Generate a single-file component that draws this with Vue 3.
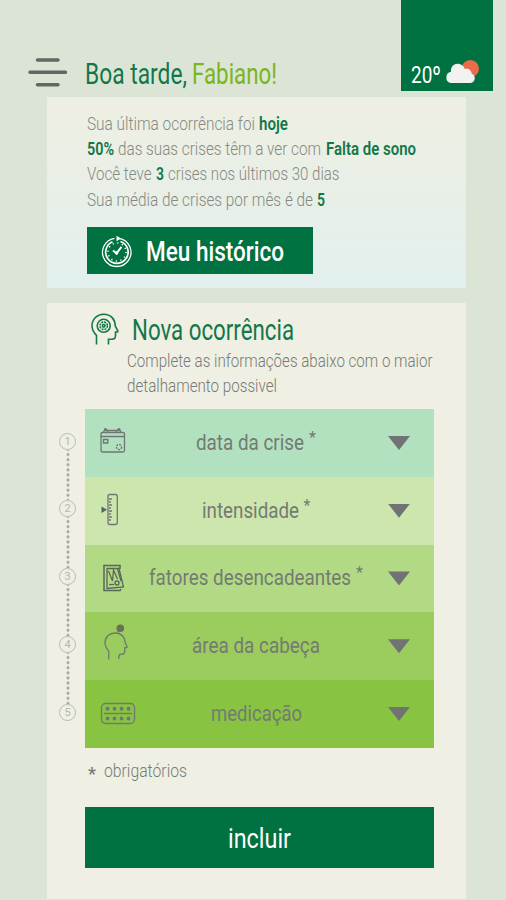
<script setup>
// Condenses a piece of text horizontally to the given width, keeping the flow in step.
const vFit = {
  mounted(el, { value }) {
    const natural = el.getBoundingClientRect().width
    el.style.transform = `scaleX(${value / natural})`
    el.style.marginRight = `${value - natural}px`
  },
}

const summary = [
  [{ t: 'Sua última ocorrência foi', w: 168 }, { t: 'hoje', w: 29, b: true }],
  [{ t: '50%', w: 27, b: true }, { t: 'das suas crises têm a ver com', w: 203 }, { t: 'Falta de sono', w: 90, b: true }],
  [{ t: 'Você teve', w: 64.5 }, { t: '3', w: 8, b: true }, { t: 'crises nos últimos 30 dias', w: 171.5 }],
  [{ t: 'Sua média de crises por mês é de', w: 226 }, { t: '5', w: 8, b: true }],
]

const steps = [
  { id: 'date', label: 'data da crise', w: 108, required: true },
  { id: 'intensity', label: 'intensidade', w: 97, required: true },
  { id: 'factors', label: 'fatores desencadeantes', w: 202, required: true },
  { id: 'area', label: 'área da cabeça', w: 128 },
  { id: 'medication', label: 'medicação', w: 91 },
]
</script>

<template>
  <div class="screen">
    <header class="top">
      <svg class="menu" width="40" height="30" viewBox="0 0 40 30">
        <path d="M10.500 3H31M3 15.300H38.500M10.500 27.800H31" stroke="#646663" stroke-width="3.500" stroke-linecap="round" />
      </svg>
      <h1 class="greeting">
        <span v-fit="102" class="fit">Boa tarde,</span>
        <span v-fit="85" class="fit name">Fabiano!</span>
      </h1>
      <div class="weather">
        <span v-fit="30" class="fit">20º</span>
        <svg width="36" height="26" viewBox="0 0 36 26">
          <circle cx="25.300" cy="9.700" r="8.700" fill="#ed6b4b" />
          <path d="M6 24a5.700 5.700 0 0 1 0-11.200C5.500 7.500 9 4.700 12.500 4.700c3.500 0 6.500 2.300 7.200 5.200 4-1 6.800 1.300 7 4.800a4.900 4.900 0 0 1-.7 9.300Z" fill="#f1f2f1" />
        </svg>
      </div>
    </header>

    <section class="card summary">
      <p v-for="(line, i) in summary" :key="i" class="line">
        <span v-for="part in line" :key="part.t" v-fit="part.w" class="fit" :class="{ strong: part.b }">{{ part.t }}</span>
      </p>
      <button class="history">
        <svg width="32" height="34" viewBox="0 0 32 34" fill="none" stroke="#fff">
          <path d="M13.500 3.300A14.200 14.200 0 1 0 18 3.300" stroke-width="1.300" />
          <path d="M11.500 6.800A11.200 11.200 0 1 0 19.500 6.500" stroke-width="1.700" />
          <circle cx="16" cy="17" r="9" stroke-width="1.500" stroke-dasharray="1.200 3.512" />
          <path d="m12 15.500 3.500 2.800 5-6.500" stroke-width="2" />
          <circle cx="15.700" cy="18" r="1.700" fill="#fff" stroke="none" />
          <path d="m15.500 .8 4.500 2.700-4.500 2.800Z" fill="#fff" stroke="none" />
        </svg>
        <span v-fit="138" class="fit">Meu histórico</span>
      </button>
    </section>

    <section class="card entry">
      <div class="entry-title">
        <svg width="28" height="33" viewBox="0 0 28 33" fill="none" stroke="#147847" stroke-width="1.600">
          <path d="M5.500 31.500v-9.200C2.500 19.500 1 16.500 1 12.800a11.500 11.500 0 0 1 11.700-11.600c7.300 0 11.500 5.300 11.500 11.600l2.600 5c.3.700-.2 1.200-.9 1.200h-1.400v3.500c0 2.500-1.200 3.700-3.500 3.700h-3.500v5.300" />
          <circle cx="12.700" cy="12.800" r="6.500" stroke-width="1.600" />
          <circle cx="12.700" cy="12.800" r="3.700" stroke-dasharray="2 .9" />
          <circle cx="12.700" cy="12.800" r="1.300" />
        </svg>
        <h2><span v-fit="162" class="fit">Nova ocorrência</span></h2>
      </div>
      <p class="hint">
        <span v-fit="305.5" class="fit">Complete as informações abaixo com o maior</span><br>
        <span v-fit="150" class="fit">detalhamento possivel</span>
      </p>

      <div class="form">
        <ol class="stepper">
          <li v-for="(step, i) in steps" :key="step.id"><span>{{ i + 1 }}</span></li>
        </ol>
        <div class="rows">
          <div v-for="step in steps" :key="step.id" class="row" :class="step.id">
            <svg class="icon" width="36" height="44" viewBox="0 0 36 44" fill="none" stroke="#6f7774" stroke-width="1.300">
              <g v-if="step.id === 'date'">
                <rect x="1" y="11.500" width="23.500" height="19.500" rx="1.500" />
                <path d="M1 15.500h23.500M7 9.500h11M3.200 11.500 5 8.500l2 .8 1 2.200M16 11.500l1.200-2.500 2-.6 2 3.100M3.500 18.500h4.300v3.500H3.500z" />
                <circle cx="19" cy="26" r="2.600" stroke-dasharray="2 1" />
                <circle cx="5.500" cy="8.700" r="1" /><circle cx="19" cy="8.700" r="1" />
              </g>
              <g v-else-if="step.id === 'intensity'">
                <rect x="8" y="5.500" width="9.300" height="30" rx="2" />
                <path d="M9 10h3M9 13h2M9 16h3M9 19h2M9 22h3M9 25h2M9 28h3M9 31h2" />
                <path d="m1.500 17.500 5.500 3.200-5.500 3.200Z" fill="#506663" stroke="none" />
              </g>
              <g v-else-if="step.id === 'factors'" stroke="#59665a">
                <path d="M20 13V9.500H4v25h16l1-1.500" stroke-width="1.500" />
                <path d="M7 12.500h12l4.500 18.500-16.500 1.500Z" stroke-width="1.300" />
                <path d="m8.500 15 4 10 1-11 4 9M17.500 13l3.500 12" />
                <circle cx="17" cy="27" r="2" /><path d="M9 28.500h5" />
              </g>
              <g v-else-if="step.id === 'area'">
                <path d="M8.800 35.500v-8.200C6.500 24.500 5 22.500 5 18.700c0-5.700 4.300-9.700 10-9.700 6 0 9.500 3.800 10 9.200l2 4.500c.3.700-.2 1-.7 1h-1.500v3.500c0 2-.8 3-2.800 3-2.500 0-3.200.8-3.200 2.800v2" />
                <path d="M17.500 8.500 20 4" />
                <circle cx="20.300" cy="4.300" r="3.800" fill="#67705a" stroke="none" />
              </g>
              <g v-else>
                <rect x="1.500" y="11.500" width="33" height="20" rx="4" />
                <path d="M4 21.500h28" />
                <path d="M7.500 16.800h.01M14.500 16.800h.01M21.500 16.800h.01M28.500 16.800h.01M7.500 26.500h.01M14.500 26.500h.01M21.500 26.500h.01M28.500 26.500h.01" stroke-width="3.900" stroke-linecap="round" />
              </g>
            </svg>
            <div class="label">
              <span v-fit="step.w" class="fit">{{ step.label }}</span>
              <span v-if="step.required" class="star">*</span>
            </div>
            <span class="caret"></span>
          </div>
        </div>
      </div>

      <p class="note"><span class="note-star">*</span><span v-fit="83" class="fit">obrigatórios</span></p>
      <button class="submit"><span v-fit="63" class="fit">incluir</span></button>
    </section>
  </div>
</template>

<style>
body {
  margin: 0;
  background: #dce5d5;
}
</style>

<style scoped>
.screen {
  box-sizing: border-box;
  width: 506px;
  height: 900px;
  overflow: hidden;
  background: #dce5d5;
  font-family: Roboto, "Liberation Sans", sans-serif;
  color: #858983;
}
h1, h2, p, ol {
  margin: 0;
  padding: 0;
  font-weight: 400;
}
button {
  border: 0;
  padding: 0;
  font-family: inherit;
  color: #fff;
  background: #007141;
}
.fit {
  display: inline-block;
  flex: none;
  white-space: nowrap;
  transform-origin: 0 50%;
}
.top {
  display: flex;
  height: 97px;
  padding-left: 27px;
}
.menu {
  margin-top: 57px;
}
.greeting {
  display: flex;
  gap: 5px;
  margin: 57px 0 0 18px;
  font-size: 29px;
  line-height: 34px;
  color: #12774a;
}
.name {
  color: #7ab51d;
}
.weather {
  display: flex;
  align-items: flex-end;
  gap: 4px;
  box-sizing: border-box;
  width: 92px;
  height: 90.500px;
  margin-left: auto;
  margin-right: 13px;
  padding: 0 0 6px 10px;
  background: #007141;
  color: #fff;
  font-size: 24px;
  line-height: 20px;
}
.card {
  box-sizing: border-box;
  width: 419px;
  margin-left: 47px;
}
.summary {
  height: 191px;
  padding: 15px 0 0 39.500px;
  background: linear-gradient(#efefe2, #e8efe8 55%, #e2f0ef);
}
.line {
  display: flex;
  gap: 4.500px;
  height: 25.200px;
  font-size: 18.500px;
  line-height: 25px;
  font-weight: 300;
}
.strong {
  font-weight: 600;
  color: #12774a;
}
.history {
  display: flex;
  align-items: center;
  gap: 13px;
  width: 226px;
  height: 46.500px;
  margin-top: 14.700px;
  padding: 2px 0 0 14px;
  font-size: 28px;
  font-weight: 500;
}
.entry {
  height: 596px;
  margin-top: 15px;
  padding-top: 8.500px;
  background: #efefe3;
}
.entry-title {
  display: flex;
  gap: 13px;
  height: 36px;
  padding: 1px 0 0 43.500px;
}
.entry-title h2 {
  font-size: 29px;
  line-height: 34px;
  color: #12774a;
}
.hint {
  padding-left: 79.500px;
  font-size: 18.500px;
  line-height: 25.500px;
  font-weight: 300;
  color: #777a75;
}
.form {
  display: flex;
  margin-top: 9.500px;
  padding-left: 12px;
}
.stepper {
  display: flex;
  flex-direction: column;
  width: 17px;
  list-style: none;
  padding-top: 23.500px;
}
.stepper li {
  display: flex;
  flex-direction: column;
  align-items: center;
  height: 67.800px;
}
.stepper li span {
  box-sizing: border-box;
  width: 17px;
  height: 17px;
  flex: none;
  border: 1.500px solid #b9bbb3;
  border-radius: 50%;
  font-size: 11px;
  line-height: 15px;
  text-align: center;
  color: #b5b7b0;
}
.stepper li:not(:last-child)::after {
  content: "";
  width: 4px;
  flex: 1;
  background: radial-gradient(circle, #a6a8a1 1.100px, transparent 1.900px) 0 2px / 4px 5.100px;
}
.stepper li:last-child {
  height: 17px;
}
.rows {
  width: 349px;
  margin-left: 9px;
}
.row {
  display: flex;
  align-items: center;
  height: 67.800px;
  padding-left: 15px;
  box-sizing: border-box;
}
.icon {
  flex: none;
}
.date { background: #b2e1bf; }
.intensity { background: #cce6ae; }
.factors { background: #b2da85; }
.area { background: #9bcc5e; }
.medication { background: #88c442; }
.label {
  display: flex;
  justify-content: center;
  gap: 5px;
  width: 240px;
  margin-top: -2px;
  font-size: 22.500px;
  line-height: 28px;
  color: #747a72;
}
.star {
  width: 7px;
  font-size: 16px;
  line-height: 20px;
}
.caret {
  margin-left: 12px;
  width: 22px;
  height: 14px;
  background: #707274;
  clip-path: polygon(0 0, 100% 0, 50% 100%);
}
.note {
  display: flex;
  gap: 8px;
  padding-left: 41px;
  margin-top: 10px;
  font-size: 18px;
  line-height: 26px;
  color: #777a75;
  font-weight: 300;
}
.note-star {
  width: 8px;
  line-height: 31px;
  height: 26px;
  font-weight: 500;
}
.submit {
  display: flex;
  align-items: center;
  justify-content: center;
  width: 349px;
  height: 61px;
  margin: 23px 0 0 38px;
  padding-top: 3px;
  font-size: 28px;
}
</style>
